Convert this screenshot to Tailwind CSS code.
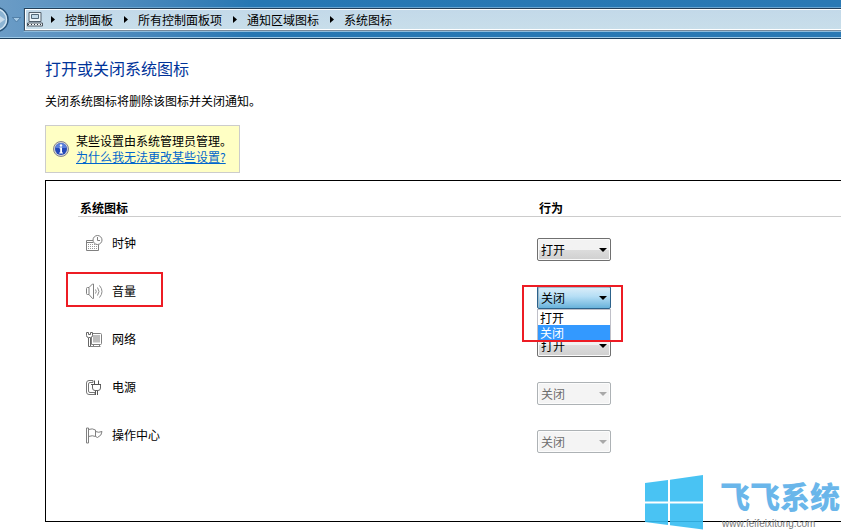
<!DOCTYPE html>
<html lang="zh-CN">
<head>
<meta charset="utf-8">
<meta name="viewport" content="width=device-width, initial-scale=1">
<title>系统图标</title>
<script src="https://cdn.jsdelivr.net/npm/@tailwindcss/browser@4"></script>
</head>
<body class="relative min-h-screen overflow-x-hidden bg-white font-['Noto_Sans_CJK_SC',sans-serif] text-xs leading-4 text-black">

<header class="flex border-b border-[#1d3f5c] bg-linear-to-r from-[#6b9cc6] via-[#2677b3] via-30% to-[#2a79b4]">
  <div class="flex w-full border-b border-[#9cc8e6] pt-[7px] pb-[5px]">
    <button type="button" aria-label="前进" class="w-[9px] shrink-0 overflow-hidden">
      <svg width="9" height="25" viewBox="0 0 9 25">
        <circle cx="-4" cy="12.500" r="12" fill="#8db4d3" stroke="#2a5479" stroke-width="1.5"/>
        <circle cx="-4" cy="12.500" r="10.500" fill="none" stroke="#d5e6f2" stroke-width="1.2"/>
        <path d="M-3 7 5 12.500-3 18Z" fill="#c9dceb"/>
      </svg>
    </button>
    <button type="button" aria-label="最近浏览的页面" class="flex w-[14px] shrink-0 items-center justify-center">
      <svg width="9" height="6" viewBox="0 0 9 6"><path d="M.5.5h8L4.500 5Z" fill="#a5cae6" stroke="#3c6c96" stroke-width=".7"/></svg>
    </button>
    <div class="min-w-0 flex-1 border-y border-l border-t-[#6ba5d0] border-b-[#8dbbdc] border-l-[#5b8fb9]">
      <nav aria-label="路径" class="flex h-[23px] items-center border-t border-b border-l border-t-[#233f59] border-b-[#75889a] border-l-[#344c63]">
        <ol class="flex h-full w-full items-center border-y border-l border-white bg-linear-to-b from-[#c3d9e9] to-[#c8deea] pl-px whitespace-nowrap">
          <li class="flex items-center">
            <svg class="mr-2" width="16" height="15" viewBox="0 0 16 15" aria-hidden="true">
              <path d="M2 .5h12v9H2z" fill="#edf5fa" stroke="#53606c"/>
              <path d="M4.500 2.500h7v4h-7z" fill="#c4dbea" stroke="#536879"/>
              <path d="M.5 11h15v3H.5z" fill="#f3f7f9" stroke="#4e5963"/>
              <path d="M1 12.500h14" stroke="#2c3944" stroke-dasharray="1 2"/>
            </svg>
            <svg width="4" height="7" viewBox="0 0 4 7" aria-hidden="true"><path d="M0 0v7l4-3.500Z"/></svg>
          </li>
          <li class="flex items-center"><a href="#" class="mr-[11px] ml-[10px]">控制面板</a><svg width="4" height="7" viewBox="0 0 4 7" aria-hidden="true"><path d="M0 0v7l4-3.500Z"/></svg></li>
          <li class="flex items-center"><a href="#" class="mr-[11px] ml-[10px]">所有控制面板项</a><svg width="4" height="7" viewBox="0 0 4 7" aria-hidden="true"><path d="M0 0v7l4-3.500Z"/></svg></li>
          <li class="flex items-center"><a href="#" class="mr-[11px] ml-[10px]">通知区域图标</a><svg width="4" height="7" viewBox="0 0 4 7" aria-hidden="true"><path d="M0 0v7l4-3.500Z"/></svg></li>
          <li><a href="#" class="mr-[11px] ml-[10px]" aria-current="page">系统图标</a></li>
        </ol>
      </nav>
    </div>
  </div>
</header>

<main class="pt-[19px] pb-2 pl-[45px]">
  <h1 class="text-base leading-5 text-[#003399]">打开或关闭系统图标</h1>
  <p class="mt-[15px]">关闭系统图标将删除该图标并关闭通知。</p>

  <aside class="mt-4 flex w-fit items-center gap-[7px] border border-[#cccccc] bg-[#ffffc4] p-[7px]">
    <svg width="16" height="16" viewBox="0 0 16 16" aria-hidden="true">
      <circle cx="8" cy="8" r="7.500" fill="#d3d3d6" stroke="#85858c"/>
      <circle cx="8" cy="8" r="6" fill="#2449b8"/>
      <path d="M2.500 7a5.500 5 0 0 1 11 0Z" fill="#5b80da"/>
      <circle cx="8" cy="4.500" r="1.200" fill="#fff"/>
      <path d="M6.500 6.500h2.500v5h1v1H6.200v-1h1v-4h-.7Z" fill="#fff"/>
    </svg>
    <p>某些设置由系统管理员管理。<br><a href="#" class="text-[#0066cc] underline underline-offset-1">为什么我无法更改某些设置?</a></p>
  </aside>

  <section class="mt-[7px] border-y border-l border-black pt-[18px] pb-16 pl-8">
    <table class="w-full border-separate border-spacing-0 text-left">
      <thead>
        <tr>
          <th scope="col" class="h-[18px] w-[459px] border-b border-[#cccccc] p-0 pl-[2px] font-bold">系统图标</th>
          <th scope="col" class="border-b border-[#cccccc] p-0 pl-[2px] font-bold">行为</th>
        </tr>
      </thead>
      <tbody>
        <tr class="h-12 align-top">
          <td class="p-0 pt-[18px] pl-2">
            <label for="clock" class="flex h-4 w-fit items-center gap-[9px]">
              <svg width="17" height="17" viewBox="0 0 17 17" fill="none" stroke="#808080" aria-hidden="true">
                <path d="M7 5.500H.5v10h12v-6M1 7.500h6"/>
                <path d="M2 9.500h9M2 11.500h9M2 13.500h9" stroke="#999" stroke-dasharray="1 1"/>
                <circle cx="11.500" cy="5" r="4.500" fill="#fff"/>
                <path d="M11.500 2v3.500h2.500"/>
              </svg>
              时钟
            </label>
          </td>
          <td class="p-0 pt-[21px]">
            <div class="relative w-[74px]">
              <select id="clock" class="block h-[23px] w-full appearance-none rounded-xs border border-[#707070] bg-linear-to-b from-[#f2f2f2] from-50% via-[#dddddd] via-50% to-[#d0d0d0] pl-[3px] text-xs leading-4 shadow-[inset_0_0_0_1px_#fafafa]"><option selected>打开</option><option>关闭</option></select>
              <svg class="pointer-events-none absolute top-[10px] right-1" width="8" height="4" viewBox="0 0 8 4" aria-hidden="true"><path d="M0 0h8L4 4Z"/></svg>
            </div>
          </td>
        </tr>
        <tr class="h-12 align-top">
          <td class="p-0 pt-[18px] pl-2">
            <label for="volume" class="relative flex h-4 w-fit items-center gap-[9px]">
              <svg width="17" height="17" viewBox="0 0 17 17" fill="none" stroke="#808080" aria-hidden="true">
                <path d="M3 4.500H1.500Q.5 4.500.5 5.500v5q0 1 1 1H3L6.500 15.500h1V1h-1L3 4.500v7"/>
                <path d="M9.500 6.500q1.500 2 0 4M11.500 4.500q3 4 0 8M13.500 2.500q5 6 0 12" stroke="#8c8c8c"/>
              </svg>
              音量
              <span class="absolute -top-[11px] -right-[27px] -bottom-2 -left-5 border-2 border-[#ed1c24]"></span>
            </label>
          </td>
          <td class="p-0 pt-[21px]">
            <div class="relative w-[74px]">
              <select id="volume" class="block h-[23px] w-full appearance-none rounded-xs border border-[#2c628b] bg-linear-to-b from-[#dceef9] from-0% via-[#b5def5] via-45% to-[#68b3db] pl-[3px] text-xs leading-4 shadow-[inset_1px_1px_0_#9eb9ca]"><option>打开</option><option selected>关闭</option></select>
              <svg class="pointer-events-none absolute top-[10px] right-1" width="8" height="4" viewBox="0 0 8 4" aria-hidden="true"><path d="M0 0h8L4 4Z"/></svg>
              <ul role="listbox" aria-label="音量" class="absolute inset-x-0 top-full z-10 border border-[#c0c0c8] bg-white leading-[15px]">
                <li role="option" aria-selected="false" class="pl-[2px]">打开</li>
                <li role="option" aria-selected="true" class="bg-[#3399ff] pl-[2px] text-white">关闭</li>
              </ul>
              <span class="pointer-events-none absolute -top-px -right-3 -bottom-[33px] -left-[15px] z-20 border-2 border-[#ed1c24]"></span>
            </div>
          </td>
        </tr>
        <tr class="h-12 align-top">
          <td class="p-0 pt-[18px] pl-2">
            <label for="network" class="flex h-4 w-fit items-center gap-[9px]">
              <svg width="17" height="17" viewBox="0 0 17 17" fill="none" stroke="#666" aria-hidden="true">
                <path d="M5.500 2.500h9q1 0 1 1v9q0 1-1 1h-9z" fill="#fff" stroke="#808080"/>
                <path d="M7 4h7v7.500H7z" fill="#bcbcbc" stroke="none"/>
                <path d="M4.500 15.500h10M7.500 13.500v2M13.500 13.500v2" stroke="#808080"/>
                <path d="M.5 1.500v3q0 2 2 2h2q2 0 2-2v-3H4.500v2h-2v-2Z" fill="#fff"/>
                <path d="M2.500 7v8.500h2V7" fill="#fff"/>
              </svg>
              网络
            </label>
          </td>
          <td class="p-0 pt-[21px]">
            <div class="relative w-[74px]">
              <select id="network" class="block h-[23px] w-full appearance-none rounded-xs border border-[#707070] bg-linear-to-b from-[#f2f2f2] from-50% via-[#dddddd] via-50% to-[#d0d0d0] pl-[3px] text-xs leading-4 shadow-[inset_0_0_0_1px_#fafafa]"><option selected>打开</option><option>关闭</option></select>
              <svg class="pointer-events-none absolute top-[10px] right-1" width="8" height="4" viewBox="0 0 8 4" aria-hidden="true"><path d="M0 0h8L4 4Z"/></svg>
            </div>
          </td>
        </tr>
        <tr class="h-12 align-top">
          <td class="p-0 pt-[18px] pl-2">
            <label for="power" class="flex h-4 w-fit items-center gap-[9px]">
              <svg width="17" height="17" viewBox="0 0 17 17" fill="none" stroke="#666" aria-hidden="true">
                <path d="M7 1.500H3Q.5 1.500.5 4v9q0 2.500 2.500 2.500h6v-2H4Q2.500 13.500 2.500 12V5Q2.500 3.500 4 3.500h3Z" stroke="#777"/>
                <path d="M5 5.500h10M8.500 5V1.500M12.500 5V1.500" stroke="#555"/>
                <path d="M6.500 6v3q0 2.500 2.500 2.500h3q2.500 0 2.500-2.500V6" fill="#fff"/>
                <path d="M9.500 12v4M11.500 12v4" stroke="#555"/>
              </svg>
              电源
            </label>
          </td>
          <td class="p-0 pt-[21px]">
            <div class="relative w-[74px]">
              <select id="power" disabled class="block h-[23px] w-full appearance-none rounded-xs border border-[#adb2b5] bg-[#f4f4f4] pl-[3px] text-xs leading-4 text-[#6d6d6d] opacity-100 shadow-[inset_0_0_0_1px_#fcfcfc]"><option>打开</option><option selected>关闭</option></select>
              <svg class="pointer-events-none absolute top-[10px] right-1" width="8" height="4" viewBox="0 0 8 4" aria-hidden="true"><path d="M0 0h8L4 4Z" fill="#a9a9a9"/></svg>
            </div>
          </td>
        </tr>
        <tr class="h-12 align-top">
          <td class="p-0 pt-[18px] pl-2">
            <label for="action" class="flex h-4 w-fit items-center gap-[9px]">
              <svg width="17" height="17" viewBox="0 0 17 17" fill="none" stroke="#808080" aria-hidden="true">
                <path d="M.5 1v15h2V1Z"/>
                <path d="M2.500 2.500q4-1.500 7 .5v6.500q-3-1.500-7 0M9.500 4.500q3 1.500 6.500 0 0 4-4.500 6l-2-1"/>
              </svg>
              操作中心
            </label>
          </td>
          <td class="p-0 pt-[21px]">
            <div class="relative w-[74px]">
              <select id="action" disabled class="block h-[23px] w-full appearance-none rounded-xs border border-[#adb2b5] bg-[#f4f4f4] pl-[3px] text-xs leading-4 text-[#6d6d6d] opacity-100 shadow-[inset_0_0_0_1px_#fcfcfc]"><option>打开</option><option selected>关闭</option></select>
              <svg class="pointer-events-none absolute top-[10px] right-1" width="8" height="4" viewBox="0 0 8 4" aria-hidden="true"><path d="M0 0h8L4 4Z" fill="#a9a9a9"/></svg>
            </div>
          </td>
        </tr>
      </tbody>
    </table>
  </section>
</main>

<div class="pointer-events-none absolute right-0 bottom-0 flex items-end gap-4">
  <svg class="mb-px" width="60" height="56" viewBox="0 0 60 56" fill="#35bcf2" fill-opacity=".9" aria-hidden="true">
    <path d="M1 9 24 6v21.500H1ZM26 5.700 59 1v26.500H26ZM1 29.500h23V51L1 48ZM26 29.500h33v26L26 51.300Z"/>
  </svg>
  <div class="w-[121px] whitespace-nowrap">
    <p class="text-[30px] leading-9 font-black text-[#6ab6ea]">飞飞系统</p>
    <p class="pt-1 pl-[2px] font-['Liberation_Sans',sans-serif] text-[10px] leading-[14px] text-[#777777]">www.feifeixitong.com</p>
  </div>
</div>
</body>
</html>
